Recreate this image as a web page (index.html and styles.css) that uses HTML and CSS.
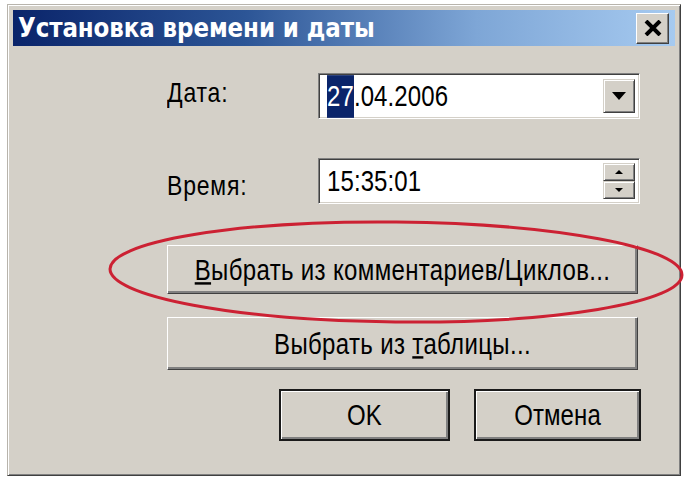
FILE: index.html
```html
<!DOCTYPE html>
<html lang="ru">
<head>
<meta charset="utf-8">
<title>Установка времени и даты</title>
<link rel="stylesheet" href="styles.css">
</head>
<body>
<div class="window">
  <div class="titlebar">
    <span class="title t">Установка времени и даты</span>
    <span class="close" aria-label="Закрыть">
      <svg width="18" height="16" viewBox="0 0 18 16"><path d="M2 1 L16 15 M16 1 L2 15" stroke="#000" stroke-width="4"/></svg>
    </span>
  </div>
  <div class="body">
    <div class="form">
      <div class="label"><span class="t">Дата:</span></div>
      <div class="field">
        <span class="value t"><span class="sel">27</span>.04.2006</span>
        <span class="drop"><svg width="14" height="8" viewBox="0 0 14 8"><path d="M0 0 H14 L7 8 Z" fill="#000"/></svg></span>
      </div>
      <div class="label"><span class="t">Время:</span></div>
      <div class="field">
        <span class="value t">15:35:01</span>
        <span class="spin">
          <span class="spinbtn"><svg width="8" height="4" viewBox="0 0 8 4"><path d="M0 4 H8 L4 0 Z" fill="#000"/></svg></span>
          <span class="spinbtn"><svg width="8" height="4" viewBox="0 0 8 4"><path d="M0 0 H8 L4 4 Z" fill="#000"/></svg></span>
        </span>
      </div>
    </div>
    <div class="btn wide first"><span class="t"><u>В</u>ыбрать из комментариев/Циклов...</span></div>
    <div class="btn wide second"><span class="t">Выбрать из <u>т</u>аблицы...</span></div>
    <div class="actions">
      <div class="btn framed ok"><span class="t">OK</span></div>
      <div class="btn framed cancel"><span class="t">Отмена</span></div>
    </div>
  </div>
  <svg class="mark" width="691" height="483" viewBox="0 0 691 483">
    <ellipse cx="396" cy="272" rx="286" ry="50" fill="none" stroke="#cc2133" stroke-width="3" transform="rotate(0.6 396 272)"/>
  </svg>
</div>
</body>
</html>
```
FILE: styles.css
```css
* { box-sizing: border-box; }
html, body { margin: 0; padding: 0; background: #fff; }
body {
  width: 691px;
  height: 483px;
  overflow: hidden;
  font-family: "Liberation Sans", Arial, sans-serif;
  color: #000;
}
.t {
  display: inline-block;
  transform: scaleY(1.22);
}
.window {
  position: relative;
  margin: 4px 0 0 7px;
  width: 674px;
  height: 472px;
  background: #d4d0c8;
  border: 1px solid;
  border-color: #b8b4ac #404040 #404040 #b8b4ac;
  box-shadow: inset 1px 1px #fff, inset -1px -1px #808080;
  padding: 5px;
  display: flex;
  flex-direction: column;
}
.titlebar {
  height: 36px;
  background: linear-gradient(to right, #0a246a 0%, #2c5596 35%, #7ea6d6 70%, #a6caf0 100%);
  display: flex;
  align-items: center;
  justify-content: space-between;
  padding: 0 6px 0 5px;
}
.title {
  color: #fff;
  font-family: "DejaVu Sans", Verdana, sans-serif;
  font-weight: bold;
  font-size: 23px;
  letter-spacing: -0.1px;
  transform: scaleY(1.15);
}
.close {
  width: 33px;
  height: 31px;
  background: #d4d0c8;
  border: 1px solid;
  border-color: #fff #404040 #404040 #fff;
  box-shadow: inset -1px -1px #808080;
  display: flex;
  align-items: center;
  justify-content: center;
}
.body {
  flex: 1;
  padding: 27px 0 0 154px;
  font-size: 24px;
}
.form {
  display: grid;
  grid-template-columns: 151px 322px;
  grid-template-rows: 46px 46px;
  row-gap: 39px;
  align-items: center;
}
.label {
  font-size: 23px;
  letter-spacing: 0.8px;
}
.form .label:first-child { margin-top: -8px; }
.form .label:nth-child(3) { margin-top: 8px; }
.field {
  height: 46px;
  background: #fff;
  border: 1px solid;
  border-color: #808080 #fff #fff #808080;
  box-shadow: inset 1px 1px #404040, inset -1px -1px #d4d0c8;
  display: flex;
  align-items: center;
  justify-content: space-between;
  padding: 2px 4px 2px 8px;
}
.value { letter-spacing: 0.1px; }
.sel {
  background: #0a246a;
  color: #fff;
  display: inline-block;
  padding: 3px 0 4px;
}
.drop {
  width: 32px;
  height: 34px;
  background: #d4d0c8;
  border: 1px solid;
  border-color: #d4d0c8 #404040 #404040 #d4d0c8;
  box-shadow: inset 1px 1px #fff, inset -1px -1px #808080;
  display: flex;
  align-items: center;
  justify-content: center;
}
.spin {
  width: 32px;
  height: 36px;
  display: flex;
  flex-direction: column;
}
.spinbtn {
  flex: 1;
  background: #d4d0c8;
  border: 1px solid;
  border-color: #d4d0c8 #404040 #404040 #d4d0c8;
  box-shadow: inset 1px 1px #fff, inset -1px -1px #808080;
  display: flex;
  align-items: center;
  justify-content: center;
}
.btn {
  background: #d4d0c8;
  display: flex;
  align-items: center;
  justify-content: center;
  font-size: 24px;
  letter-spacing: 0.1px;
}
.btn u { text-decoration-thickness: 2px; text-underline-offset: 2px; }
.wide {
  width: 471px;
  border: 1px solid;
  border-color: #fff #404040 #404040 #fff;
  box-shadow: inset -2px -2px #808080;
  letter-spacing: 0.35px;
}
.first { height: 49px; margin-top: 41px; }
.second { height: 53px; margin-top: 23px; }
.actions {
  display: flex;
  gap: 24px;
  margin-top: 19px;
  padding-left: 112px;
}
.framed {
  height: 52px;
  border: 2px solid #1a1a1a;
  box-shadow: inset 1px 1px #fff, inset -2px -2px #808080;
}
.ok { width: 171px; }
.cancel { width: 167px; }
.mark {
  position: absolute;
  left: -8px;
  top: -5px;
  pointer-events: none;
}
```
